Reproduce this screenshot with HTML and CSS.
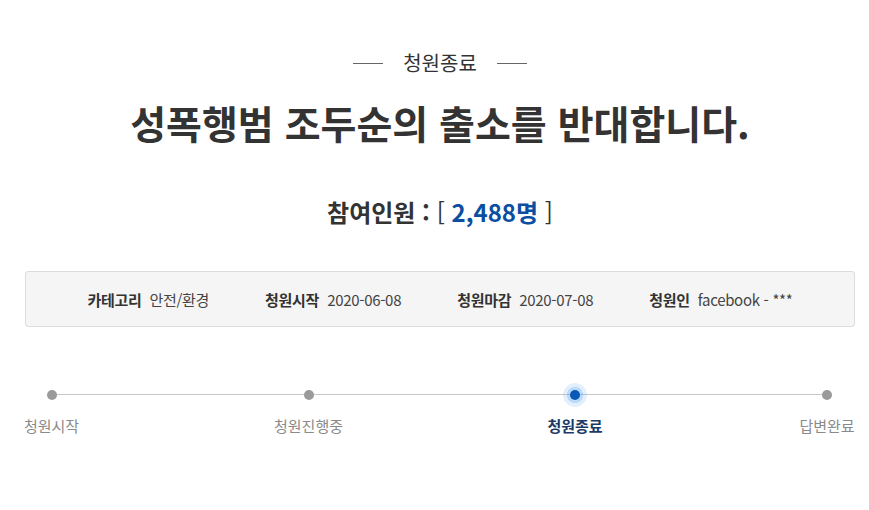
FILE: index.html
```html
<!DOCTYPE html>
<html lang="ko">
<head>
<meta charset="utf-8">
<title>청원종료</title>
<link rel="stylesheet" href="styles.css">
</head>
<body>
<div class="wrap">
  <div class="status"><span class="dash"></span><span class="status-text">청원종료</span><span class="dash"></span></div>
  <h1 class="title">성폭행범 조두순의 출소를 반대합니다.</h1>
  <div class="count"><span class="count-label">참여인원</span> <span class="colon">:</span> <span class="bracket">[</span> <span class="num">2,488명</span> <span class="bracket">]</span></div>
  <ul class="info">
    <li class="info-item"><span class="info-label">카테고리</span><span class="info-value">안전/환경</span></li>
    <li class="info-item"><span class="info-label">청원시작</span><span class="info-value">2020-06-08</span></li>
    <li class="info-item"><span class="info-label">청원마감</span><span class="info-value">2020-07-08</span></li>
    <li class="info-item"><span class="info-label">청원인</span><span class="info-value">facebook - ***</span></li>
  </ul>
  <ol class="steps">
    <li class="step s1"><span class="dot"></span><span class="step-label">청원시작</span></li>
    <li class="step s2"><span class="dot"></span><span class="step-label">청원진행중</span></li>
    <li class="step s3 active"><span class="dot"></span><span class="step-label">청원종료</span></li>
    <li class="step s4"><span class="dot"></span><span class="step-label">답변완료</span></li>
  </ol>
</div>
</body>
</html>
```
FILE: styles.css
```css
* { box-sizing: border-box; }
html, body { margin: 0; padding: 0; background: #fff; }
body {
  font-family: "Noto Sans CJK KR", "Noto Sans", sans-serif;
  color: #333;
}
.wrap {
  width: 830px;
  margin-left: 25px;
  padding-top: 50px;
}
.status {
  display: flex;
  justify-content: center;
  align-items: center;
  gap: 20px;
  height: 26px;
}
.dash {
  display: block;
  width: 30px;
  height: 1px;
  background: #666;
}
.status-text {
  font-size: 20px;
  line-height: 26px;
  color: #333;
}
.title {
  margin: 21px 0 0;
  text-align: center;
  font-size: 39px;
  line-height: 50px;
  font-weight: 700;
  color: #333;
}
.count {
  margin-top: 48px;
  text-align: center;
  font-size: 24px;
  line-height: 34px;
  font-weight: 700;
  color: #333;
}
.colon { font-weight: 700; }
.bracket { font-weight: 400; }
.num { color: #0b4ea2; font-weight: 700; }
.info {
  list-style: none;
  margin: 42px 0 0;
  padding: 0;
  height: 56px;
  border: 1px solid #dcdcdc;
  border-radius: 3px;
  background: #f5f5f5;
  display: flex;
  justify-content: center;
  align-items: center;
  gap: 56px;
  font-size: 15px;
}
.info-item { display: flex; gap: 8px; align-items: baseline; letter-spacing: -0.3px; }
.info-label { font-weight: 700; color: #333; }
.info-value { color: #444; }
.steps {
  list-style: none;
  margin: 56px 0 0;
  padding: 0;
  position: relative;
  display: grid;
  grid-template-columns: 55px 195px 68px 205px 55px 197px 55px;
}
.steps::before {
  content: "";
  position: absolute;
  left: 26px;
  right: 28px;
  top: 11px;
  height: 1px;
  background: #c8c8c8;
}
.step {
  display: flex;
  flex-direction: column;
  align-items: center;
  position: relative;
}
.s1 { grid-column: 1; margin-left: -2px; }
.s2 { grid-column: 3; margin-left: -1px; }
.s3 { grid-column: 5; margin-left: -1px; }
.s4 { grid-column: 7; margin-left: -1px; }
.dot {
  width: 24px;
  height: 24px;
  display: flex;
  align-items: center;
  justify-content: center;
}
.dot::after {
  content: "";
  width: 10px;
  height: 10px;
  border-radius: 50%;
  background: #9a9a9a;
}
.active .dot {
  border-radius: 50%;
  background: radial-gradient(circle, rgba(60,150,240,0.35) 0 8px, rgba(60,150,240,0.15) 8px 12px, transparent 12px);
}
.active .dot::after { background: #0a58b8; }
.step-label {
  margin-top: 8px;
  font-size: 15px;
  line-height: 22px;
  color: #8a8a8a;
  white-space: nowrap;
}
.active .step-label { color: #1d3a66; font-weight: 700; }
```
